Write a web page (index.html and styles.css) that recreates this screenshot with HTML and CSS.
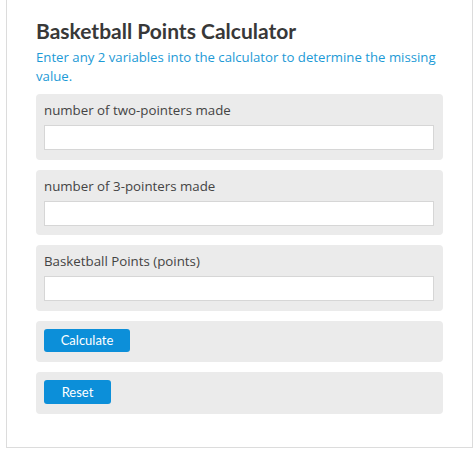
FILE: index.html
```html
<!DOCTYPE html>
<html>
<head>
<meta charset="utf-8">
<link rel="stylesheet" href="styles.css">
</head>
<body>
<div class="card">
  <h1 class="title">Basketball Points Calculator</h1>
  <p class="intro">Enter any 2 variables into the calculator to determine the missing value.</p>
  <div class="rows">
    <div class="field">
      <label class="label">number of two-pointers made</label>
      <input class="input" type="text">
    </div>
    <div class="field">
      <label class="label">number of 3-pointers made</label>
      <input class="input" type="text">
    </div>
    <div class="field">
      <label class="label">Basketball Points (points)</label>
      <input class="input" type="text">
    </div>
    <div class="field action">
      <button class="btn btn-calc">Calculate</button>
    </div>
    <div class="field action">
      <button class="btn btn-reset">Reset</button>
    </div>
  </div>
</div>
</body>
</html>
```
FILE: styles.css
```css
html, body {
  margin: 0;
  padding: 0;
  background: #fff;
}
body {
  font-family: "Open Sans", "DejaVu Sans", sans-serif;
}
.card {
  margin: 0 1px 7px 6px;
  border: 1px solid #dcdcdc;
  border-top: 0;
  padding: 17px 29px 33px 29px;
  background: #fff;
}
.title {
  margin: 0;
  font-family: "Lato", sans-serif;
  font-weight: 700;
  font-size: 21px;
  line-height: 28px;
  color: #383838;
}
.intro {
  margin: 3px 0 8px 0;
  font-size: 13.2px;
  line-height: 19px;
  color: #1d9ad6;
}
.rows {
  display: flex;
  flex-direction: column;
  gap: 10px;
}
.field {
  background: #ebebeb;
  border-radius: 4px;
  padding: 7px 9px 9.5px 8px;
  display: flex;
  flex-direction: column;
}
.label {
  font-size: 13.3px;
  line-height: 18px;
  color: #444;
  margin-bottom: 6px;
}
.input {
  height: 25px;
  box-sizing: border-box;
  border: 1px solid #d6d6d6;
  background: #fff;
  margin: 0;
  padding: 0 6px;
}
.action {
  padding: 8px 8px 10px 8px;
  align-items: flex-start;
}
.btn {
  font-family: "Lato", sans-serif;
  font-size: 13px;
  color: #fff;
  background: #0c8fd9;
  border: 0;
  border-radius: 3px;
  height: 23px;
  padding: 0;
  margin: 0;
}
.btn-calc { width: 86px; }
.btn-reset { width: 67px; height: 24px; }
```
